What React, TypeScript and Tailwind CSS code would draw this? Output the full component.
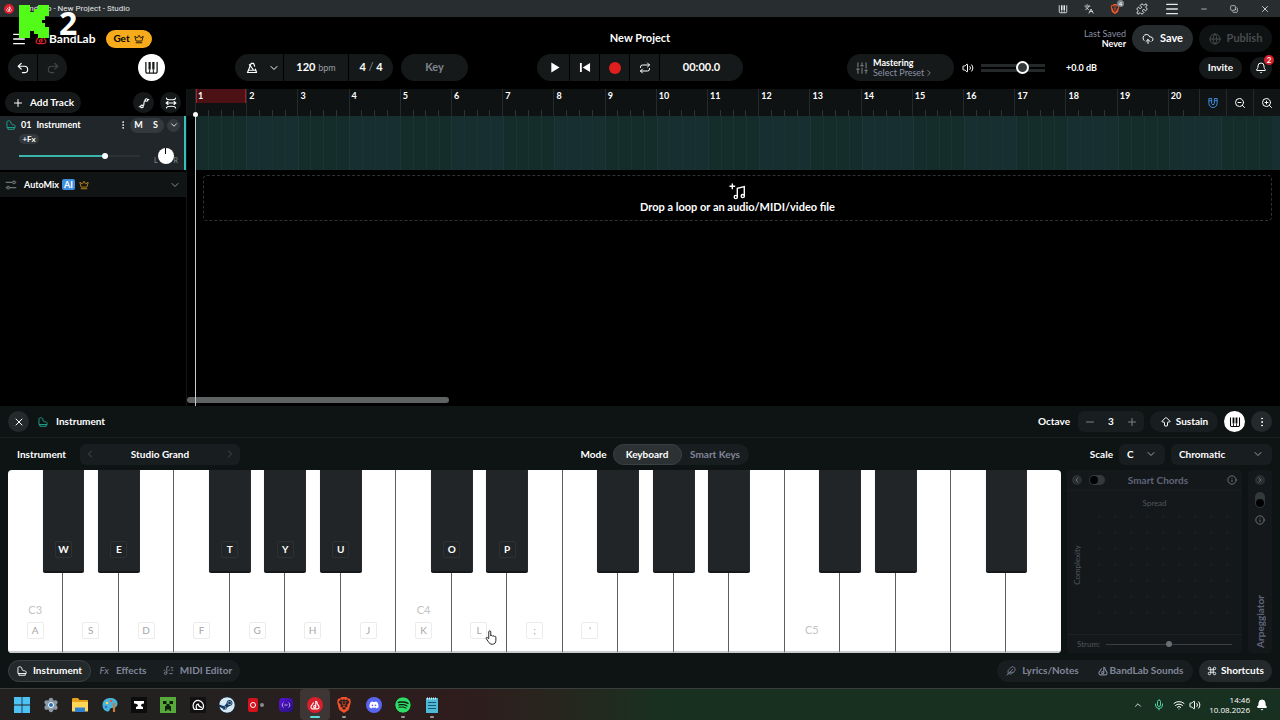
import React, { useState } from 'react';
import {
  ArrowBigUp, Bell, ChevronDown, ChevronLeft, ChevronRight, ChevronUp, CloudUpload, Command, Copy, Crown,
  EllipsisVertical, Feather, Globe, Info, Languages, Menu, Mic, Minus, Plus, Puzzle, Redo2, Repeat,
  Settings, SlidersVertical, Undo2, Volume2, Wifi, X, ZoomIn, ZoomOut,
} from 'lucide-react';
import { FaDiscord, FaSpotify, FaSteam } from 'react-icons/fa';
import { SiBrave } from 'react-icons/si';

const BARS = Array.from({ length: 21 }, (_, i) => i + 1);

type WhiteKey = { label?: string; note?: string; black?: boolean; blackLabel?: string };

const KEYS: WhiteKey[] = [
  { label: 'A', note: 'C3', black: true, blackLabel: 'W' },
  { label: 'S', black: true, blackLabel: 'E' },
  { label: 'D' },
  { label: 'F', black: true, blackLabel: 'T' },
  { label: 'G', black: true, blackLabel: 'Y' },
  { label: 'H', black: true, blackLabel: 'U' },
  { label: 'J' },
  { label: 'K', note: 'C4', black: true, blackLabel: 'O' },
  { label: 'L', black: true, blackLabel: 'P' },
  { label: ';' },
  { label: "'", black: true },
  { black: true },
  { black: true },
  {},
  { note: 'C5', black: true },
  { black: true },
  {},
  { black: true },
  {},
];

const PianoIcon = ({ className = '' }: { className?: string }) => (
  <svg viewBox="0 0 16 16" className={className} fill="none" stroke="currentColor" strokeWidth="1.4" aria-hidden="true">
    <path d="M2 2v10.5a1.5 1.5 0 0 0 1.5 1.5h9a1.5 1.5 0 0 0 1.5-1.5V2" />
    <path d="M6 10v4M10 10v4" strokeWidth="1.1" />
    <path d="M6 2v8M10 2v8" strokeWidth="2.4" />
  </svg>
);

const GrandIcon = ({ className = '' }: { className?: string }) => (
  <svg viewBox="0 0 16 16" className={className} fill="none" stroke="currentColor" strokeWidth="1.5" strokeLinejoin="round" aria-hidden="true">
    <path d="M1.500 12V3.500c0-1.500 1-2.300 2.800-2.300S8 2.300 8 4.500c0 2.300 1.300 3 3 3s3.700.8 3.700 3V12z" />
    <path d="M3 12v2.800h10.200V12" />
  </svg>
);

const BandLabIcon = ({ className = '' }: { className?: string }) => (
  <svg viewBox="0 0 16 16" className={className} fill="none" stroke="currentColor" strokeWidth="1.7" strokeLinecap="round" strokeLinejoin="round" aria-hidden="true">
    <path d="M5.500 4.500 1.900 9.800c-1.200 2 .1 4.400 2.500 4.400h7.200c2.400 0 3.700-2.400 2.500-4.400L11 5" />
    <path d="M9.200 10.500V2l2.300 1.500" />
    <circle cx="7.500" cy="10.500" r="1.700" />
  </svg>
);

const MetronomeIcon = () => (
  <svg viewBox="0 0 16 16" className="h-3 w-3" fill="none" stroke="currentColor" strokeWidth="1.600" strokeLinejoin="round" strokeLinecap="round" aria-hidden="true">
    <path d="M11.500 5.500 10 1.800H7L2 14h12l-1.500-4.500" />
    <path d="M4 11h9M9.500 10 4.500 3.500" />
  </svg>
);

const NoteIcon = () => (
  <svg viewBox="0 0 18 18" className="h-[17px] w-[17px]" fill="none" stroke="currentColor" strokeWidth="1.500" aria-hidden="true">
    <path d="M3.500 .5v6M.5 3.500h6" />
    <path d="M8.800 14.500V5.500l7.400-1.700v9.700" />
    <circle cx="7.200" cy="14.800" r="1.700" />
    <circle cx="14.600" cy="13.800" r="1.700" />
  </svg>
);

const SnapIcon = () => (
  <svg viewBox="0 0 16 16" className="h-3 w-3" fill="none" stroke="currentColor" strokeWidth="1.300" aria-hidden="true">
    <path d="M2.500 2v6.500a5.500 5.500 0 0 0 11 0V2h-3.700v6.500a1.800 1.800 0 0 1-3.600 0V2zM2.500 5h3.700M9.800 5h3.700" />
  </svg>
);

const AutomationIcon = () => (
  <svg viewBox="0 0 16 16" className="h-3 w-3" fill="none" stroke="currentColor" strokeWidth="1.500" aria-hidden="true">
    <path d="M1 13h2.500M6.800 11.500c2.700-1.500-.5-5.500 2.800-6.800M12.800 3.500H15" />
    <circle cx="5.200" cy="12.500" r="1.700" />
    <circle cx="11.200" cy="4" r="1.700" />
  </svg>
);

const FitIcon = () => (
  <svg viewBox="0 0 16 16" className="h-3 w-3" fill="none" stroke="currentColor" strokeWidth="1.400" strokeLinecap="round" aria-hidden="true">
    <path d="M2 1.500c0 3 12 3 12 0M2 14.500c0-3 12-3 12 0M1.500 8h13M4 6 1.500 8 4 10M12 6l2.500 2L12 10" />
  </svg>
);

const MixIcon = ({ className = '' }: { className?: string }) => (
  <svg viewBox="0 0 16 16" className={className} fill="none" stroke="currentColor" strokeWidth="1.400" aria-hidden="true">
    <path d="M1 4.500h9M14 4.500h1M1 11.500h1.500M6 11.500h9" />
    <circle cx="12" cy="4.500" r="1.700" />
    <circle cx="4.200" cy="11.500" r="1.700" />
  </svg>
);

const MidiIcon = () => (
  <svg viewBox="0 0 16 16" className="h-[11px] w-[11px]" fill="none" stroke="currentColor" strokeWidth="1.300" aria-hidden="true">
    <path d="M5.500 12V2.500h3M1 7.500h2M8 7.500h2M12 7.500h3M9 12.500h5M11 4h4" />
    <circle cx="3.700" cy="12" r="1.800" />
  </svg>
);

const KickLogo = () => (
  <svg viewBox="0 0 8 9" preserveAspectRatio="none" className="h-[33px] w-[30px]" fill="#53fc18" shapeRendering="crispEdges" aria-hidden="true">
    <rect x="0" y="0" width="3" height="9" />
    <rect x="3" y="2" width="1" height="5" />
    <rect x="4" y="1" width="1" height="7" />
    <rect x="5" y="0" width="1" height="9" />
    <rect x="6" y="0" width="1" height="4" />
    <rect x="6" y="5" width="1" height="4" />
    <rect x="7" y="0" width="1" height="3" />
    <rect x="7" y="6" width="1" height="3" />
  </svg>
);

const PointerHand = () => (
  <svg viewBox="0 0 16 20" className="h-[15px] w-3" fill="#fff" stroke="#222" strokeWidth="1.300" strokeLinejoin="round" aria-hidden="true">
    <path d="M5 11.500V2.500a1.300 1.300 0 0 1 2.700 0V8c.2-1 2.300-.9 2.400.3.300-.9 2.200-.7 2.300.5.400-.8 2.100-.5 2.100.8v4.200c0 3.200-1.700 5.200-4.700 5.200-2.800 0-4.100-1.300-5.300-3.400L1.600 11.500c-.6-1.200.8-2.100 1.800-1.200z" />
  </svg>
);

const TitleBar = () => (
  <div className="flex h-[17px] items-center justify-between bg-[#282d2f] px-1 text-[#e6e8e8]">
    <div className="flex items-center gap-1.5">
      <span className="flex h-2.5 w-2.5 items-center justify-center rounded-full bg-[#d81f2c] text-white">
        <BandLabIcon className="h-1.5 w-1.5" />
      </span>
      <span className="font-['Roboto',sans-serif] text-[8px]">BandLab - New Project - Studio</span>
    </div>
    <div className="flex items-center gap-4 pr-1.5">
      <PianoIcon className="h-2.5 w-2.5" />
      <Languages className="h-2.5 w-2.5" />
      <span className="relative text-[#f0562b]">
        <SiBrave className="h-2.5 w-2.5" />
        <span className="absolute -top-1 -right-1 h-[7px] w-[7px] rounded-full bg-[#7d8588] text-center text-[6px] leading-[7px] text-white">4</span>
      </span>
      <Puzzle className="h-3 w-3" />
      <Menu className="h-4 w-4" />
      <div className="ml-1 flex items-center gap-[22px]">
        <button aria-label="Minimize"><Minus className="h-2 w-2" /></button>
        <button aria-label="Restore"><Copy className="h-2 w-2 -scale-x-100 rotate-90" /></button>
        <button aria-label="Close"><X className="h-2.5 w-2.5" /></button>
      </div>
    </div>
  </div>
);

const Header = () => {
  const [volume, setVolume] = useState(68);
  return (
    <header className="flex flex-col gap-0.5 px-2 pt-2 pb-2">
      <div className="flex h-[27px] items-center">
        <div className="flex flex-1 items-center">
          <button aria-label="Menu" className="ml-[3px]"><Menu className="h-4 w-4" /></button>
          <a href="#home" className="ml-2 flex items-center gap-0.5 text-xs font-bold">
            <BandLabIcon className="h-3 w-3 text-[#d81f2c]" />
            <span>BandLab</span>
          </a>
          <button className="ml-2.5 flex h-[18px] w-[46px] items-center justify-center gap-1 rounded-full bg-[#f6ab1d] text-[10px] font-bold text-black">
            Get <Crown className="h-2.5 w-2.5" />
          </button>
        </div>
        <h1 className="text-[11px] font-bold">New Project</h1>
        <div className="flex flex-1 items-center justify-end gap-1.5">
          <div className="text-right text-[9px] leading-[10px]">
            <div className="text-[#8b90a6]">Last Saved</div>
            <div className="font-bold">Never</div>
          </div>
          <button className="flex h-[27px] w-[61px] items-center justify-center gap-1.5 rounded-full bg-[#272c2e] text-[11px] font-bold">
            <CloudUpload className="h-3 w-3" /> Save
          </button>
          <button className="flex h-[27px] w-[73px] items-center justify-center gap-1.5 rounded-full bg-[#0f1213] text-[11px] font-bold text-[#474c4f]">
            <Globe className="h-3 w-3" /> Publish
          </button>
        </div>
      </div>

      <div className="flex h-[27px] items-stretch">
        <div className="flex flex-1 items-stretch">
          <div className="flex gap-px">
            <button aria-label="Undo" className="flex w-[29px] items-center justify-center rounded-l-full bg-[#16191a]"><Undo2 className="h-3.5 w-3.5" /></button>
            <button aria-label="Redo" className="flex w-[29px] items-center justify-center rounded-r-full bg-[#16191a] text-[#42474a]"><Redo2 className="h-3.5 w-3.5" /></button>
          </div>
          <button aria-label="Instrument panel" className="ml-[71px] flex w-[27px] items-center justify-center rounded-full bg-white text-[#16191a]">
            <PianoIcon className="h-[15px] w-[15px]" />
          </button>
          <div className="ml-[70px] flex gap-px text-[11px] font-bold">
            <button aria-label="Metronome" className="flex w-12 items-center justify-center gap-2.5 rounded-l-full bg-[#16191a] pl-2"><MetronomeIcon /><ChevronDown className="h-3 w-3" /></button>
            <button className="w-16 bg-[#16191a]">120 <span className="text-[9px] font-normal text-[#9a9fa8]">bpm</span></button>
            <button className="w-11 rounded-r-full bg-[#16191a]">4 <span className="font-normal text-[#8b9094]">/</span> 4</button>
          </div>
          <button className="ml-2 w-[67px] rounded-full bg-[#16191a] text-[11px] font-bold text-[#80858d]">Key</button>
        </div>

        <div className="flex gap-px">
          <button aria-label="Play" className="flex w-8 items-center justify-center rounded-l-full bg-[#16191a] pl-1">
            <svg viewBox="0 0 10 12" className="h-[11px] w-2.5" fill="currentColor"><path d="M1 .5 10 6 1 11.500z" /></svg>
          </button>
          <button aria-label="Back to start" className="flex w-[29px] items-center justify-center bg-[#16191a]">
            <svg viewBox="0 0 12 12" className="h-[11px] w-3" fill="currentColor"><path d="M.5 1h2v10h-2zM11.500 1v10L3.500 6z" /></svg>
          </button>
          <button aria-label="Record" className="flex w-[29px] items-center justify-center bg-[#16191a]"><span className="h-3 w-3 rounded-full bg-[#e01e1e]" /></button>
          <button aria-label="Loop" className="flex w-[29px] items-center justify-center bg-[#16191a]"><Repeat className="h-3 w-3" /></button>
          <div className="flex w-[83px] items-center justify-center rounded-r-full bg-[#16191a] text-[11px] font-bold">00:00.0</div>
        </div>

        <div className="flex flex-1 items-center justify-end">
          <button className="flex h-[27px] w-[107px] items-center gap-1 rounded-full bg-[#16191a] pl-2 text-left">
            <SlidersVertical className="h-3.5 w-3.5 text-[#74797c]" />
            <span className="text-[9px] leading-[10px]">
              <span className="block font-bold">Mastering</span>
              <span className="flex items-center text-[#8b90a6]">Select Preset <ChevronRight className="h-2.5 w-2.5" /></span>
            </span>
          </button>
          <Volume2 className="ml-2 h-3 w-3" />
          <input
            type="range"
            aria-label="Master volume"
            value={volume}
            onChange={e => setVolume(Number(e.target.value))}
            className="ml-[7px] h-2 w-16 appearance-none border-y-[3px] border-[#26292a] bg-black [&::-webkit-slider-thumb]:h-[13px] [&::-webkit-slider-thumb]:w-[13px] [&::-webkit-slider-thumb]:appearance-none [&::-webkit-slider-thumb]:rounded-full [&::-webkit-slider-thumb]:border-2 [&::-webkit-slider-thumb]:border-white [&::-webkit-slider-thumb]:bg-[#36393b]"
          />
          <span className="ml-[21px] w-[133px] text-[9px] font-bold">+0.0 dB</span>
          <button className="h-[22px] w-[43px] rounded-full bg-[#16191a] text-[10px] font-bold">Invite</button>
          <button aria-label="Notifications" className="relative ml-2 flex h-[22px] w-[22px] items-center justify-center rounded-full bg-[#16191a]">
            <Bell className="h-3 w-3" />
            <span className="absolute -top-0.5 -right-0.5 h-2.5 w-2.5 rounded-full bg-[#d81f2c] text-center text-[8px] leading-[10px] font-bold">2</span>
          </button>
        </div>
      </div>
    </header>
  );
};

const TrackList = () => {
  const [level, setLevel] = useState(72);
  return (
    <aside className="w-[187px] shrink-0 border-r border-[#111516]">
      <div className="flex h-[27px] items-center px-[5px]">
        <button className="flex h-[21px] w-[76px] items-center justify-center gap-1.5 rounded-full bg-[#16191a] text-[10px] font-bold">
          <Plus className="h-3 w-3" /> Add Track
        </button>
        <button aria-label="Automation" className="ml-auto flex h-[21px] w-[21px] items-center justify-center rounded-full bg-[#16191a]"><AutomationIcon /></button>
        <button aria-label="Fit tracks" className="ml-1.5 flex h-[21px] w-[21px] items-center justify-center rounded-full bg-[#16191a]"><FitIcon /></button>
      </div>

      <div className="h-[54px] border-r-2 border-[#34c3b9] bg-[#20262a] pl-1.5">
        <div className="flex h-[18px] items-center pr-1 text-[9px] font-bold">
          <GrandIcon className="h-2.5 w-2.5 text-[#1fa48c]" />
          <span className="ml-[5px]">01</span>
          <span className="ml-[5px]">Instrument</span>
          <button aria-label="Track options" className="ml-auto"><EllipsisVertical className="h-2.5 w-2.5" /></button>
          <div className="ml-0.5 flex h-[15px] w-[34px] rounded-full bg-[#33393c]">
            <button aria-label="Mute" className="flex-1">M</button>
            <button aria-label="Solo" className="flex-1">S</button>
          </div>
          <button aria-label="Expand track" className="ml-[3px] flex h-[13px] w-[13px] items-center justify-center rounded-full bg-[#33393c]"><ChevronDown className="h-2.5 w-2.5" /></button>
        </div>
        <button className="ml-[13px] block h-2.5 w-5 rounded-full bg-[#33393c] text-[8px] leading-[10px] font-bold">+Fx</button>
        <div className="flex h-[23px] items-center pl-[13px]">
          <input
            type="range"
            aria-label="Track volume"
            value={level}
            onChange={e => setLevel(Number(e.target.value))}
            style={{ background: `linear-gradient(to right, #3bb5ac ${level}%, #2b3134 ${level}%)` }}
            className="h-0.5 w-[121px] appearance-none [&::-webkit-slider-thumb]:h-1.5 [&::-webkit-slider-thumb]:w-1.5 [&::-webkit-slider-thumb]:appearance-none [&::-webkit-slider-thumb]:rounded-full [&::-webkit-slider-thumb]:bg-white"
          />
          <div className="ml-3.5 flex items-end text-[7px] leading-2 text-[#868c90]">
            L
            <button aria-label="Pan" className="flex h-4 w-4 justify-center rounded-full bg-white"><span className="h-1.5 w-px bg-black" /></button>
            R
          </div>
        </div>
      </div>

      <div className="mt-0.5 flex h-[25px] items-center bg-[#101415] px-[5px] text-[9px] font-bold">
        <MixIcon className="h-3 w-3 text-[#6d7376]" />
        <span className="ml-[7px]">AutoMix</span>
        <span className="ml-[3px] rounded-xs bg-[#3f8fe0] px-0.5 leading-[11px]">AI</span>
        <Crown className="ml-1 h-2.5 w-2.5 text-[#d8951c]" />
        <button aria-label="Expand AutoMix" className="ml-auto text-[#8d9295]"><ChevronDown className="h-3 w-3" /></button>
      </div>
    </aside>
  );
};

const Timeline = () => (
  <section className="relative flex min-w-0 flex-1 flex-col">
    <div className="flex h-[27px] bg-[#0f1213] pl-2">
      <div className="flex flex-1">
        {BARS.slice(0, 20).map(bar => (
          <div key={bar} className={`flex min-w-0 flex-col justify-between border-l border-[#24292b] ${bar === 20 ? 'flex-[3]' : 'flex-[5]'}`}>
            <span className={`h-3.5 overflow-hidden text-[9px] leading-[14px] font-bold ${bar === 1 ? 'border-x border-[#a62028] bg-[#4b1115] pl-px' : 'pl-0.5'}`}>{bar}</span>
            <div className="flex h-1.5">
              <span className="flex-1" />
              <span className="flex-1 border-l border-[#2e3335]" />
              {bar < 20 && <span className="flex-1 border-l border-[#2e3335]" />}
              {bar < 20 && <span className="flex-1 border-l border-[#2e3335]" />}
            </div>
          </div>
        ))}
      </div>
      <div className="flex gap-px bg-[#24292b] pl-px">
        <button aria-label="Snap" className="flex w-[26px] items-center justify-center bg-[#101415] text-[#3f8fe0]"><SnapIcon /></button>
        <button aria-label="Zoom out" className="flex w-[26px] items-center justify-center bg-[#101415]"><ZoomOut className="h-3 w-3" /></button>
        <button aria-label="Zoom in" className="flex w-[26px] items-center justify-center bg-[#101415]"><ZoomIn className="h-3 w-3" /></button>
      </div>
    </div>

    <div className="flex h-[54px] pl-2">
      {BARS.map(bar => (
        <div key={bar} className={`flex flex-[25] border-l border-[#1b3836] ${bar % 2 ? 'bg-[#152d2a]' : 'bg-[#172f31]'}`}>
          <span className="flex-1" />
          <span className="flex-1 border-l border-[#1a3432]" />
          <span className="flex-1 border-l border-[#1a3432]" />
          <span className="flex-1 border-l border-[#1a3432]" />
        </div>
      ))}
      <div className="flex-[4] bg-[#172f31]" />
    </div>

    <div className="mx-2 mt-[5px] ml-4 flex h-[46px] flex-col items-center justify-center rounded border border-dashed border-[#2f3233] text-[11px] leading-[14px] font-bold">
      <NoteIcon />
      Drop a loop or an audio/MIDI/video file
    </div>

    <div className="mt-auto mb-[3px] h-1.5 w-[24%] rounded-full bg-[#606364]" />

    <div className="absolute top-[27px] bottom-0 left-2 w-px bg-[#c9cccd]">
      <span className="absolute -top-1 -left-0.5 h-[5px] w-[5px] rounded-full bg-white" />
    </div>
  </section>
);

const PanelHeader = () => {
  const [octave, setOctave] = useState(3);
  return (
    <div className="flex h-8 items-center border-b border-[#1a1f20] px-2 text-[10px] font-bold">
      <button aria-label="Close panel" className="flex h-[21px] w-[21px] items-center justify-center rounded-full bg-[#24292b]"><X className="h-3 w-3" /></button>
      <GrandIcon className="ml-[9px] h-2.5 w-2.5 text-[#1fa48c]" />
      <h2 className="ml-2">Instrument</h2>
      <span className="ml-auto">Octave</span>
      <div className="ml-2 flex h-[21px] w-[66px] items-center justify-between rounded-md bg-[#181d1f] px-1.5">
        <button aria-label="Octave down" onClick={() => setOctave(octave - 1)}><Minus className="h-3 w-3 text-[#7c8285]" /></button>
        {octave}
        <button aria-label="Octave up" onClick={() => setOctave(octave + 1)}><Plus className="h-3 w-3 text-[#7c8285]" /></button>
      </div>
      <button className="ml-1.5 flex h-[21px] w-[68px] items-center justify-center gap-1 rounded-full bg-[#181d1f]"><ArrowBigUp className="h-3 w-3" /> Sustain</button>
      <button aria-label="Keyboard view" className="ml-1.5 flex h-[21px] w-[21px] items-center justify-center rounded-full bg-white text-black"><PianoIcon className="h-3 w-3" /></button>
      <button aria-label="More" className="ml-1.5 flex h-[21px] w-[21px] items-center justify-center rounded-full bg-[#24292b]"><EllipsisVertical className="h-3 w-3" /></button>
    </div>
  );
};

const PanelControls = () => (
  <div className="flex h-8 items-center px-2 text-[10px] font-bold">
    <div className="flex flex-1 items-center pl-[9px]">
      <span className="w-[63px]">Instrument</span>
      <div className="flex h-[21px] w-40 items-center justify-between rounded-md bg-[#181d1f] px-1">
        <button aria-label="Previous preset"><ChevronLeft className="h-3 w-3 text-[#474d50]" /></button>
        <button>Studio Grand</button>
        <button aria-label="Next preset"><ChevronRight className="h-3 w-3 text-[#474d50]" /></button>
      </div>
    </div>
    <div className="flex items-center gap-1.5 pl-10">
      Mode
      <div className="flex h-[21px] rounded-full bg-[#181d1f]">
        <button className="w-[69px] rounded-full border border-[#3b4143] bg-[#2c3234]">Keyboard</button>
        <button className="w-[67px] text-[#82879a]">Smart Keys</button>
      </div>
    </div>
    <div className="flex flex-1 items-center justify-end gap-1.5">
      <label htmlFor="scale-root">Scale</label>
      <div className="relative">
        <select id="scale-root" className="h-[21px] w-[46px] appearance-none rounded-md bg-[#181d1f] pl-2">
          <option>C</option>
        </select>
        <ChevronDown className="pointer-events-none absolute top-1 right-2 h-3 w-3 text-[#9a9fa2]" />
      </div>
      <div className="relative">
        <select aria-label="Scale type" className="h-[21px] w-[101px] appearance-none rounded-md bg-[#181d1f] pl-2">
          <option>Chromatic</option>
        </select>
        <ChevronDown className="pointer-events-none absolute top-1 right-2 h-3 w-3 text-[#9a9fa2]" />
      </div>
    </div>
  </div>
);

const Piano = () => (
  <div className="flex min-w-0 flex-1 overflow-hidden rounded">
    {KEYS.map((k, i) => (
      <div key={i} className="relative flex min-w-0 flex-1 flex-col items-center justify-end gap-[5px] border-r border-b-2 border-r-[#5b5f61] border-b-[#c9cccd] bg-white pb-3 text-[#a3a6a8] last:border-r-0">
        {k.note && <span className={`text-[11px] leading-[14px] text-[#c2c4c5] ${k.label ? '' : 'pb-0.5'}`}>{k.note}</span>}
        {k.label && (
          <kbd className="h-[17px] w-[17px] rounded-xs border border-[#ececec] text-center font-['Lato',sans-serif] text-[10px] leading-[15px]">{k.label}</kbd>
        )}
        {k.label === 'L' && <span className="absolute bottom-1.5 left-[33px] z-20"><PointerHand /></span>}
        {k.black && (
          <div className="absolute top-0 -right-px z-10 flex h-[103px] w-[77%] translate-x-1/2 items-end justify-center rounded-b-xs border-b-2 border-[#14181a] bg-[#212527] pb-[13px]">
            {k.blackLabel && (
              <kbd className="h-[17px] w-[17px] rounded-xs border border-[#2d3234] text-center font-['Lato',sans-serif] text-[10px] leading-[15px] font-bold text-white">{k.blackLabel}</kbd>
            )}
          </div>
        )}
      </div>
    ))}
  </div>
);

const SmartChords = () => (
  <div className="flex w-[175px] flex-col rounded bg-[#14181a] text-[#50555b]">
    <div className="flex h-[21px] items-center border-b border-[#181d1f] px-[5px]">
      <button aria-label="Collapse chords" className="flex h-2.5 w-2.5 items-center justify-center rounded-full bg-[#2a2f31] text-[#8b9094]"><ChevronLeft className="h-2 w-2" /></button>
      <input
        type="checkbox"
        role="switch"
        id="smart-chords"
        className="ml-[7px] h-2.5 w-4 appearance-none rounded-full bg-[#34393c] before:m-px before:block before:h-2 before:w-2 before:rounded-full before:bg-black checked:before:ml-[7px]"
      />
      <label htmlFor="smart-chords" className="flex-1 pr-4 text-center text-[10px] font-bold text-[#60657a]">Smart Chords</label>
      <Info className="h-2.5 w-2.5 text-[#7b8084]" />
    </div>
    <div className="pt-1.5 text-center text-[8px] leading-3">Spread</div>
    <div className="flex flex-1 items-center gap-2 pr-2 pb-3.5 pl-1">
      <span className="rotate-180 text-[8px] leading-3 [writing-mode:vertical-rl]">Complexity</span>
      <div className="h-full flex-1 bg-[radial-gradient(#1a1f21_1px,transparent_1px)] bg-size-[16px_16px]" />
    </div>
    <div className="flex h-[19px] items-center gap-1.5 border-t border-[#1c2123] px-2.5 text-[8px]">
      <label htmlFor="strum">Strum:</label>
      <input
        id="strum"
        type="range"
        defaultValue={50}
        className="h-px min-w-0 flex-1 appearance-none bg-[#3a3f42] [&::-webkit-slider-thumb]:h-1.5 [&::-webkit-slider-thumb]:w-1.5 [&::-webkit-slider-thumb]:appearance-none [&::-webkit-slider-thumb]:rounded-full [&::-webkit-slider-thumb]:bg-[#6a6f73]"
      />
    </div>
  </div>
);

const Arpeggiator = () => (
  <div className="flex w-6 flex-col items-center rounded bg-[#14181a] py-[5px]">
    <button aria-label="Expand arpeggiator" className="flex h-2.5 w-2.5 items-center justify-center rounded-full bg-[#2a2f31] text-[#8b9094]"><ChevronRight className="h-2 w-2" /></button>
    <input
      type="checkbox"
      role="switch"
      id="arpeggiator"
      className="mt-[7px] h-4 w-2.5 appearance-none rounded-full bg-[#34393c] before:mx-px before:mt-[7px] before:block before:h-2 before:w-2 before:rounded-full before:bg-black checked:before:mt-px"
    />
    <Info className="mt-[7px] h-2.5 w-2.5 text-[#7b8084]" />
    <label htmlFor="arpeggiator" className="mt-auto rotate-180 text-[10px] leading-3 font-bold text-[#60657a] [writing-mode:vertical-rl]">Arpeggiator</label>
  </div>
);

const PanelTabs = () => (
  <div className="flex h-[35px] items-center justify-between px-2 text-[10px] font-bold">
    <div className="flex h-[22px] rounded-full bg-[#181d1f] text-[#82879a]">
      <button className="flex w-[83px] items-center justify-center gap-1.5 rounded-full border border-[#3b4143] bg-[#24292b] text-white"><GrandIcon className="h-2.5 w-2.5" /> Instrument</button>
      <button className="flex w-16 items-center justify-center gap-[7px]"><em className="font-normal">Fx</em> Effects</button>
      <button className="flex w-[85px] items-center justify-center gap-1.5"><MidiIcon /> MIDI Editor</button>
    </div>
    <div className="flex h-[22px] gap-1.5">
      <div className="flex rounded-full bg-[#181d1f] text-[#82879a]">
        <button className="flex w-[91px] items-center justify-center gap-1.5"><Feather className="h-2.5 w-2.5" /> Lyrics/Notes</button>
        <button className="flex w-[105px] items-center justify-center gap-0.5"><BandLabIcon className="h-2.5 w-2.5" /> BandLab Sounds</button>
      </div>
      <button className="flex w-[73px] items-center justify-center gap-1 rounded-full bg-[#24292b]"><Command className="h-2.5 w-2.5" /> Shortcuts</button>
    </div>
  </div>
);

const TASKS = [
  { name: 'Start', icon: <svg viewBox="0 0 16 16" className="h-4 w-4" fill="#4cc2f5"><path d="M0 0h7.600v7.600H0zM8.400 0H16v7.600H8.400zM0 8.400h7.600V16H0zM8.400 8.400H16V16H8.400z" /></svg> },
  { name: 'Settings', icon: <span className="relative flex items-center justify-center text-[#8d9aa5]"><Settings className="h-4 w-4 fill-[#8d9aa5]" /><span className="absolute h-1.5 w-1.5 rounded-full border border-white bg-[#1e6fc0]" /></span> },
  { name: 'File Explorer', icon: <svg viewBox="0 0 16 14" className="h-3.5 w-4"><path d="M0 1.500C0 .7.500 0 1.300 0H6l1.500 2H15c.6 0 1 .4 1 1v10H0z" fill="#e6a21a" /><path d="M0 4h16v9.500H0z" fill="#ffd65a" /><path d="M3 14V9.500h10V14z" fill="#2b82d4" /></svg> },
  { name: 'Paint', icon: <svg viewBox="0 0 16 16" className="h-4 w-4"><path d="M8 1C3.500 1 .5 4 .5 8s2.500 6.500 5.500 6.500c2.500 0 .8-3 3.500-3.500 3-.3 6-.5 6-4.500C15.500 3 12.500 1 8 1z" fill="#45b4dc" /><circle cx="5" cy="6" r="1.300" fill="#ffd34d" /><circle cx="9" cy="4" r="1.300" fill="#e8504d" /><circle cx="4" cy="10" r="1.300" fill="#2b6fc4" /><path d="M12 6v9" stroke="#c77b38" strokeWidth="2.200" /></svg> },
  { name: 'Anvil', icon: <svg viewBox="0 0 16 16" className="h-4 w-4"><path fill="#0c0c0c" d="M0 0h16v16H0z" /><path d="M3 4h10v2.500c-2 0-3 .8-3 2.500l2 1v2H5v-2l2-1c0-1.700-1-2-4-2.500z" fill="#fff" /></svg> },
  { name: 'Minecraft', icon: <svg viewBox="0 0 16 16" className="h-4 w-4"><path fill="#58a93c" d="M0 0h16v16H0z" /><path d="M3 4h3.500v3H3zM9.500 4H13v3H9.500zM6.500 7h3v2H11v5H9.500v-1.500h-3V14H5V9h1.500z" fill="#0f1d0b" /></svg> },
  { name: 'Launcher', icon: <svg viewBox="0 0 16 16" className="h-4 w-4" fill="none" stroke="#fff"><path fill="#111" stroke="none" d="M0 0h16v16H0z" /><path d="M4.500 12.500C2.500 10.500 2.500 6.500 5 4.500s6-1 7.500 1.500 1 5-.5 6.500zM7 12.500C5.500 10 6 7.500 8 7c.5 2 1.500 3 4 3.500" strokeWidth="1.200" /></svg> },
  { name: 'Steam', icon: <FaSteam className="h-4 w-4 rounded-full bg-[#123a63] text-[#d7e8f5]" /> },
  { name: 'Recorder', icon: <span className="flex items-center gap-0.5"><span className="flex h-3.5 w-2.5 items-center justify-center rounded-xs bg-[#d3121e]"><span className="h-1.5 w-1.5 rounded-full border border-white" /></span><span className="h-1 w-1 rounded-full bg-[#8b8b8b]" /></span> },
  { name: 'Hub', icon: <span className="flex h-3.5 w-3.5 items-center justify-center rounded bg-linear-to-br from-[#5b12d8] to-[#23107a] text-[#d9b8ff]"><svg viewBox="0 0 12 8" className="h-2 w-2.5" fill="none" stroke="currentColor"><path d="M3 1C1 2 1 6 3 7M9 1c2 1 2 5 0 6M4 4h4" /></svg></span> },
  { name: 'BandLab', active: true, icon: <span className="flex h-4 w-4 items-center justify-center rounded-full bg-[#d81f2c] text-white"><BandLabIcon className="h-2.5 w-2.5" /></span> },
  { name: 'Brave', running: true, icon: <SiBrave className="h-4 w-4 text-[#f0502a]" /> },
  { name: 'Discord', icon: <span className="flex h-4 w-4 items-center justify-center rounded-full bg-[#5865f2] text-white"><FaDiscord className="h-2.5 w-2.5" /></span> },
  { name: 'Spotify', running: true, icon: <FaSpotify className="h-4 w-4 rounded-full bg-[#0c1a10] text-[#2fdc67]" /> },
  { name: 'Notepad', running: true, icon: <svg viewBox="0 0 14 16" className="h-4 w-3.5"><path fill="#4fb9d8" d="M1 1h12v15H1z" /><path d="M3 5.500h8M3 8.500h8M3 11.500h8" stroke="#17576f" strokeWidth="1.200" /><path d="M2 1.500h10" stroke="#d8f1f8" strokeWidth="2" strokeDasharray="1 1" /></svg> },
];

const Taskbar = () => (
  <footer className="flex h-8 items-center justify-between border-t border-[#3a3f3e] bg-linear-to-r from-[#232120] from-15% via-[#2f1c1d] via-36% to-[#17301f] to-52% text-white">
    <div className="ml-[7px] flex h-full w-[440px]">
      {TASKS.map(task => (
        <button key={task.name} aria-label={task.name} className={`relative flex flex-1 items-center justify-center ${task.active ? 'rounded bg-white/10' : ''}`}>
          {task.icon}
          {task.active && <span className="absolute bottom-0.5 h-0.5 w-2.5 rounded-full bg-[#5fd8d8]" />}
          {task.running && <span className="absolute bottom-0.5 h-0.5 w-1 rounded-full bg-[#9a9a9a]" />}
        </button>
      ))}
    </div>
    <div className="flex items-center pr-3 font-['Open_Sans',sans-serif] text-[8px] leading-[10px]">
      <ChevronUp className="h-2.5 w-2.5" />
      <Mic className="ml-2.5 h-3 w-3 text-[#4fd0a4]" />
      <Wifi className="ml-2 h-3 w-3" />
      <Volume2 className="ml-1 h-3 w-3" />
      <div className="ml-2 text-right">
        14:46<br />10.08.2026
      </div>
      <Bell className="ml-1.5 h-3 w-3 fill-white" />
    </div>
  </footer>
);

const App: React.FC = () => (
  <div className="relative flex min-h-screen flex-col overflow-hidden bg-black font-['Lato',sans-serif] text-white">
    <TitleBar />
    <Header />
    <main className="flex flex-1">
      <TrackList />
      <Timeline />
    </main>
    <section className="bg-[#0e1314]">
      <PanelHeader />
      <PanelControls />
      <div className="flex h-[183px] gap-1.5 px-2">
        <Piano />
        <SmartChords />
        <Arpeggiator />
      </div>
      <PanelTabs />
    </section>
    <Taskbar />

    {/* stream overlay */}
    <div className="pointer-events-none absolute top-[3px] left-[19px] z-30 flex items-center gap-2.5">
      <KickLogo />
      <span className="pt-1 font-['Open_Sans',sans-serif] text-[32px] leading-8 font-bold [text-shadow:1px_1px_2px_#000]">2</span>
    </div>
  </div>
);

export default App;
